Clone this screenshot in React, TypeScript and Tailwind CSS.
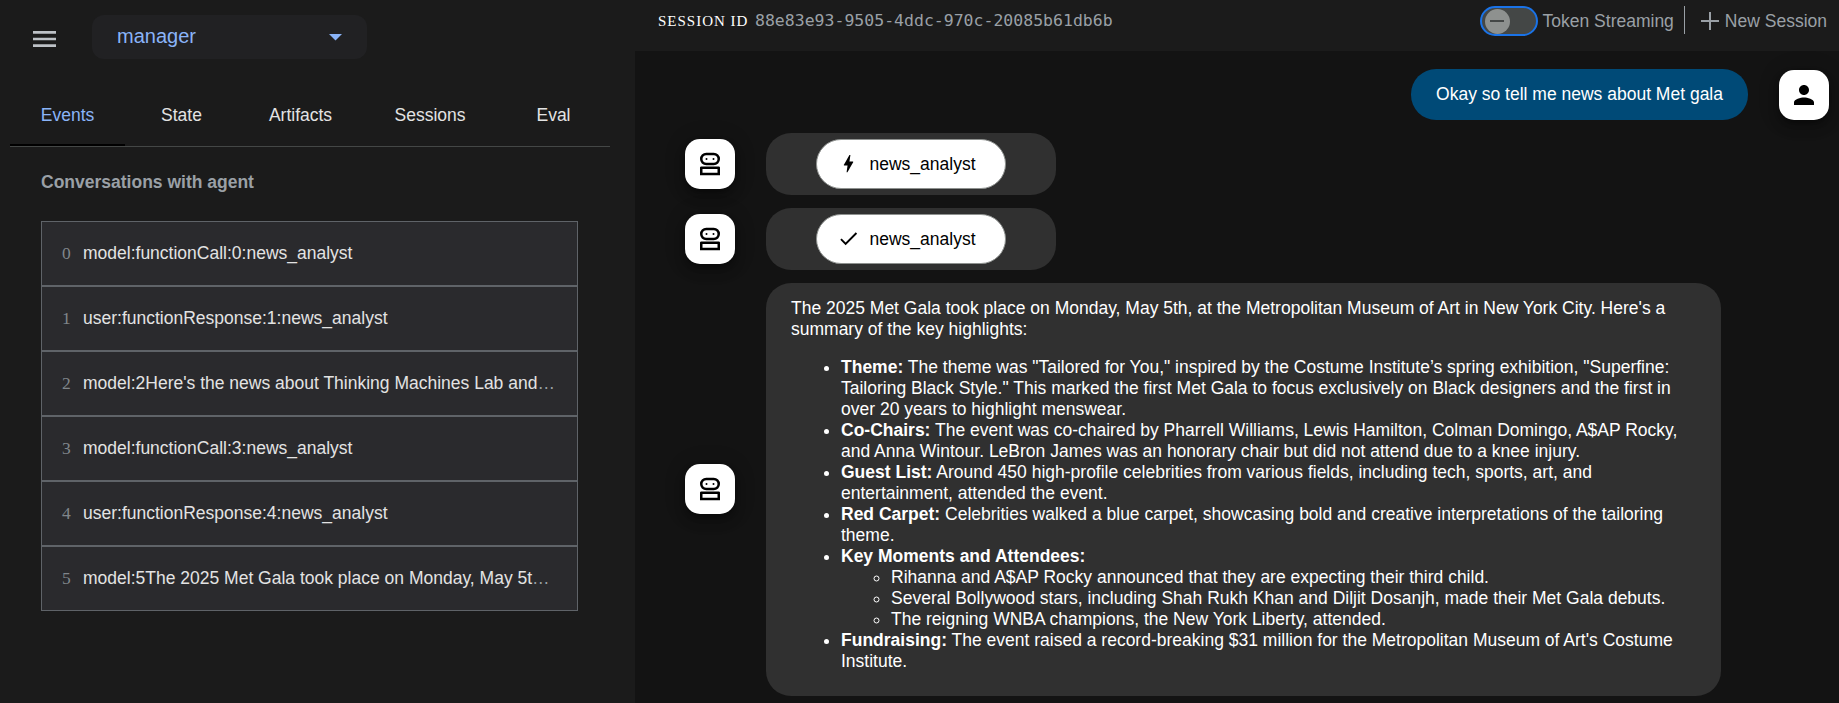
import React from "react";

const events = [
  "model:functionCall:0:news_analyst",
  "user:functionResponse:1:news_analyst",
  "model:2Here's the news about Thinking Machines Lab and",
  "model:functionCall:3:news_analyst",
  "user:functionResponse:4:news_analyst",
  "model:5The 2025 Met Gala took place on Monday, May 5t",
];

const tileShadow =
  "shadow-[0_4px_6px_-1px_rgba(0,0,0,0.3),0_7px_12px_rgba(0,0,0,0.2),0_1px_22px_rgba(0,0,0,0.15)]";

function Robot() {
  return (
    <div className={`flex size-[50px] shrink-0 items-center justify-center rounded-[15px] bg-white ${tileShadow}`}>
      <svg className="size-[30px]" viewBox="0 -960 960 960" fill="#000">
        <path d="M160-120v-240q0-17 11.500-28.500T200-400h560q17 0 28.500 11.500T800-360v240H160Zm200-320q-83 0-141.500-58.500T160-640q0-83 58.500-141.500T360-840h240q83 0 141.500 58.500T800-640q0 83-58.500 141.500T600-440H360ZM240-200h480v-120H240v120Zm120-320h240q50 0 85-35t35-85q0-50-35-85t-85-35H360q-50 0-85 35t-35 85q0 50 35 85t85 35Z" />
        <circle cx="368" cy="-640" r="32" />
        <circle cx="592" cy="-640" r="32" />
      </svg>
    </div>
  );
}

function ToolRow({ path }: { path: string }) {
  return (
    <div className="mt-[13px] flex h-[62px] items-center">
      <Robot />
      <div className="ml-[31px] flex h-[62px] w-[290px] items-center justify-center rounded-[25px] bg-[#303030]">
        <div className="flex h-[50px] w-[190px] items-center rounded-full border border-[#8e918f] bg-white pl-[20px] text-black">
          <svg className="-mt-[2px] size-[23px]" viewBox="0 0 24 24" fill="currentColor"><path d={path} /></svg>
          <span className="ml-[9.5px] leading-[20px]">news_analyst</span>
        </div>
      </div>
    </div>
  );
}

export default function App() {
  return (
    <div className="flex h-[703px] w-[1839px] overflow-hidden bg-[#131313] font-['Liberation_Sans',Arial,sans-serif] text-[17.5px] text-white">
      <aside className="flex w-[635px] shrink-0 flex-col bg-[#1b1b1b]">
        <div className="flex h-[74px] pt-[15px]">
          <svg className="ml-[33px] mt-[16px] h-[16px] w-[23px]" viewBox="0 0 23 16" fill="#bdc1c6"><path d="M0 0h23v2.700H0zM0 6.800h23v2.500H0zM0 13.200h23v2.700H0z" /></svg>
          <div className="ml-[36px] flex h-[44px] w-[275px] items-center justify-between rounded-[12px] bg-[#212123] pl-[25px] pr-[25px] text-[20px] text-[#8ab4f8]">
            <span className="-mt-[2px]">manager</span>
            <svg className="h-[7px] w-[13px]" viewBox="0 0 13 7" fill="#8ab4f8"><path d="M0 0h13L6.500 6.500z" /></svg>
          </div>
        </div>
        <nav className="ml-[10px] flex h-[73px] w-[600px] border-b border-[#444746] leading-[20px] text-[#e3e3e3]">
          <div className="flex w-[115px] justify-center border-b-2 border-black pt-[31px] text-[#8ab4f8]">Events</div>
          <div className="flex w-[113px] justify-center pt-[31px]">State</div>
          <div className="flex w-[125px] justify-center pt-[31px]">Artifacts</div>
          <div className="flex w-[134px] justify-center pt-[31px]">Sessions</div>
          <div className="flex w-[113px] justify-center pt-[31px]">Eval</div>
        </nav>
        <h3 className="ml-[41px] mt-[25px] h-[21px] font-bold leading-[20px] text-[#9aa0a6]">Conversations with agent</h3>
        <ul className="ml-[41px] mt-[28px] w-[537px] border border-[#5f6368]">
          {events.map((e, i) => (
            <li key={i} className={`flex items-center bg-[#2a2a2d] pb-px pl-[20px] leading-[26px] text-[#e3e3e3] ${i ? "h-[65px] border-t-2 border-[#5f6368]" : "h-[63px]"}`}>
              <span className="w-[21px] shrink-0 font-['Liberation_Serif',serif] text-[#80868b]">{i}</span>
              <span className="whitespace-nowrap">{e}{i % 3 === 2 && <span className="text-[#9aa0a6]">…</span>}</span>
            </li>
          ))}
        </ul>
      </aside>
      <main className="flex w-[1204px] flex-col">
        <header className="flex h-[51px] shrink-0 items-center bg-[#1b1b1b] pb-[9px]">
          <span className="ml-[23px] w-[91px] whitespace-nowrap font-['Liberation_Serif',serif] text-[15px] tracking-[1px]">SESSION ID</span>
          <span className="ml-[6px] font-['DejaVu_Sans_Mono',monospace] text-[16.5px] text-[#9aa0a6]">88e83e93-9505-4ddc-970c-20085b61db6b</span>
          <div className="ml-auto flex h-[30px] w-[58px] items-center rounded-full border-2 border-[#1a73e8] bg-[#444746] pl-[3px]">
            <div className="flex size-[25px] items-center justify-center rounded-full bg-[#8e918f]"><div className="h-[2px] w-[14px] bg-[#444746]" /></div>
          </div>
          <span className="ml-[5px] text-[#9aa0a6]">Token Streaming</span>
          <div className="-mt-[2px] ml-[10px] h-[28px] w-px bg-[#9aa0a6]" />
          <svg className="ml-[16px] size-[18px]" viewBox="0 0 18 18" fill="#9aa0a6"><path d="M8 0h2v8h8v2h-8v8H8v-8H0V8h8z" /></svg>
          <span className="ml-[6px] mr-[12px] text-[#9aa0a6]">New Session</span>
        </header>
        <div className="flex flex-col pl-[50px] pt-[18px]">
          <div className="flex items-start justify-end pr-[10px]">
            <div className="flex h-[51px] items-center rounded-[25px] bg-[#004a77] px-[25px]">Okay so tell me news about Met gala</div>
            <div className={`ml-[31px] mt-px flex size-[50px] items-center justify-center rounded-[15px] bg-white ${tileShadow}`}>
              <svg className="size-[30px]" viewBox="0 0 24 24"><path d="M12 12c2.210 0 4-1.790 4-4s-1.790-4-4-4-4 1.790-4 4 1.790 4 4 4zm0 2c-2.670 0-8 1.340-8 4v2h16v-2c0-2.660-5.330-4-8-4z" /></svg>
            </div>
          </div>
          <ToolRow path="M11 21h-1l1-7H7.500c-.58 0-.57-.32-.38-.66.190-.34.050-.08.070-.12C8.480 10.940 10.420 7.540 13 3h1l-1 7h3.500c.49 0 .56.330.47.510l-.07.150C12.960 17.550 11 21 11 21z" />
          <ToolRow path="M9 16.170L4.830 12l-1.420 1.410L9 19 21 7l-1.410-1.410z" />
          <div className="mt-[13px] flex">
            <div className="pt-[181px]"><Robot /></div>
            <div className="ml-[31px] h-[413px] w-[955px] rounded-[25px] bg-[#303030] px-[25px] pt-[14.5px] leading-[21px]">
              <p>The 2025 Met Gala took place on Monday, May 5th, at the Metropolitan Museum of Art in New York City. Here's a<br />summary of the key highlights:</p>
              <ul className="mt-[17px] list-disc pl-[50px]">
                <li><b>Theme:</b> The theme was "Tailored for You," inspired by the Costume Institute’s spring exhibition, "Superfine:<br />Tailoring Black Style." This marked the first Met Gala to focus exclusively on Black designers and the first in<br />over 20 years to highlight menswear.</li>
                <li><b>Co-Chairs:</b> The event was co-chaired by Pharrell Williams, Lewis Hamilton, Colman Domingo, A$AP Rocky,<br />and Anna Wintour. LeBron James was an honorary chair but did not attend due to a knee injury.</li>
                <li><b>Guest List:</b> Around 450 high-profile celebrities from various fields, including tech, sports, art, and<br />entertainment, attended the event.</li>
                <li><b>Red Carpet:</b> Celebrities walked a blue carpet, showcasing bold and creative interpretations of the tailoring<br />theme.</li>
                <li><b>Key Moments and Attendees:</b>
                  <ul className="list-[circle] pl-[50px]">
                    <li>Rihanna and A$AP Rocky announced that they are expecting their third child.</li>
                    <li>Several Bollywood stars, including Shah Rukh Khan and Diljit Dosanjh, made their Met Gala debuts.</li>
                    <li>The reigning WNBA champions, the New York Liberty, attended.</li>
                  </ul>
                </li>
                <li><b>Fundraising:</b> The event raised a record-breaking $31 million for the Metropolitan Museum of Art's Costume<br />Institute.</li>
              </ul>
            </div>
          </div>
        </div>
      </main>
    </div>
  );
}
